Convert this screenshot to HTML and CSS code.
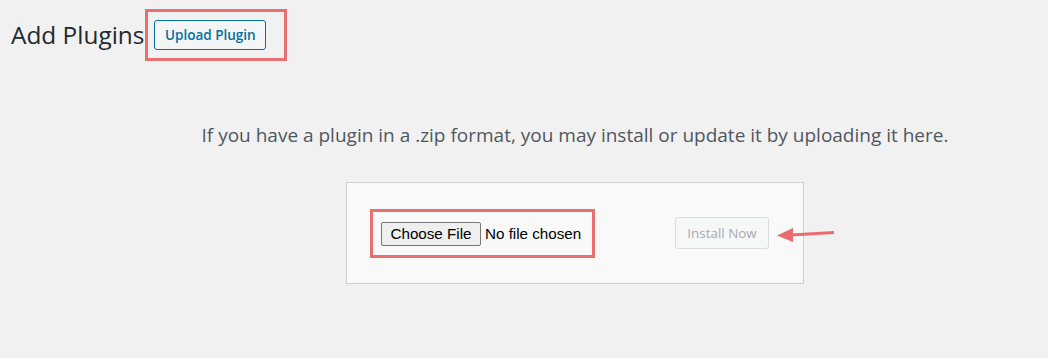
FILE: index.html
```html
<!DOCTYPE html>
<html>
<head>
<meta charset="utf-8">
<link rel="stylesheet" href="styles.css">
</head>
<body>
<div class="wrap">
  <div class="header">
    <h1 class="title">Add Plugins</h1>
    <div class="highlight highlight-top">
      <button class="upload-btn">Upload Plugin</button>
    </div>
  </div>
  <div class="upload-area">
    <p class="install-help">If you have a plugin in a .zip format, you may install or update it by uploading it here.</p>
    <div class="upload-box">
      <div class="highlight highlight-file">
        <span class="file-btn">Choose File</span>
        <span class="file-label">No file chosen</span>
      </div>
      <button class="install-btn">Install Now</button>
      <svg class="arrow" width="60" height="16" viewBox="0 0 60 16">
        <line x1="14" y1="8" x2="57" y2="5.5" stroke="#e86c6c" stroke-width="3"/>
        <polygon points="0,8.5 16,1 16,15" fill="#e86c6c"/>
      </svg>
    </div>
  </div>
</div>
</body>
</html>
```
FILE: styles.css
```css
html, body {
  margin: 0;
  padding: 0;
}
body {
  background: #f1f1f1;
  width: 1048px;
  height: 358px;
  overflow: hidden;
  font-family: "Open Sans", "Noto Sans", sans-serif;
  color: #1d2327;
}
.wrap {
  padding: 9px 0 0 11px;
}
.header {
  display: flex;
  align-items: flex-start;
}
.title {
  margin: 0;
  padding-top: 10px;
  font-size: 24.4px;
  font-weight: 400;
  line-height: 32px;
  color: #23282d;
}
.highlight {
  border: 3px solid #e87070;
  box-sizing: border-box;
}
.highlight-top {
  margin-left: 1px;
  width: 142px;
  height: 52px;
  padding: 8px 0 0 6px;
}
.upload-btn {
  width: 112px;
  height: 30px;
  box-sizing: border-box;
  border: 1px solid #0071a1;
  border-radius: 3px;
  background: #f3f5f6;
  color: #0071a1;
  font-family: "Open Sans", sans-serif;
  font-weight: 600;
  font-size: 13.5px;
  padding: 0;
  cursor: pointer;
}
.upload-area {
  padding-left: 91px;
  display: flex;
  flex-direction: column;
  align-items: center;
}
.install-help {
  margin: 61px 0 0 0;
  font-size: 19px;
  line-height: 26px;
  color: #50575e;
  white-space: nowrap;
}
.upload-box {
  margin-top: 34px;
  width: 458px;
  height: 102px;
  box-sizing: border-box;
  background: #f9f9f9;
  border: 1px solid #ccd0d4;
  display: flex;
  align-items: center;
  padding-left: 23px;
  position: relative;
}
.highlight-file {
  width: 225px;
  height: 49px;
  display: flex;
  align-items: center;
  padding-left: 8px;
  margin-top: 1px;
}
.file-btn {
  display: inline-flex;
  align-items: center;
  justify-content: center;
  width: 100px;
  height: 24px;
  box-sizing: border-box;
  border: 1px solid #767676;
  border-radius: 2px;
  background: #efefef;
  font-family: "Liberation Sans", Arial, sans-serif;
  font-size: 15.2px;
  color: #000;
}
.file-label {
  margin-left: 4px;
  font-family: "Liberation Sans", Arial, sans-serif;
  font-size: 15.2px;
  color: #000;
}
.install-btn {
  margin-left: 80px;
  width: 94px;
  height: 32px;
  box-sizing: border-box;
  border: 1px solid #dcdcde;
  border-radius: 3px;
  background: #f6f7f7;
  color: #a7aaad;
  font-family: "Open Sans", sans-serif;
  font-size: 13.4px;
  padding: 0;
}
.arrow {
  position: absolute;
  left: 430px;
  top: 44px;
}
```
